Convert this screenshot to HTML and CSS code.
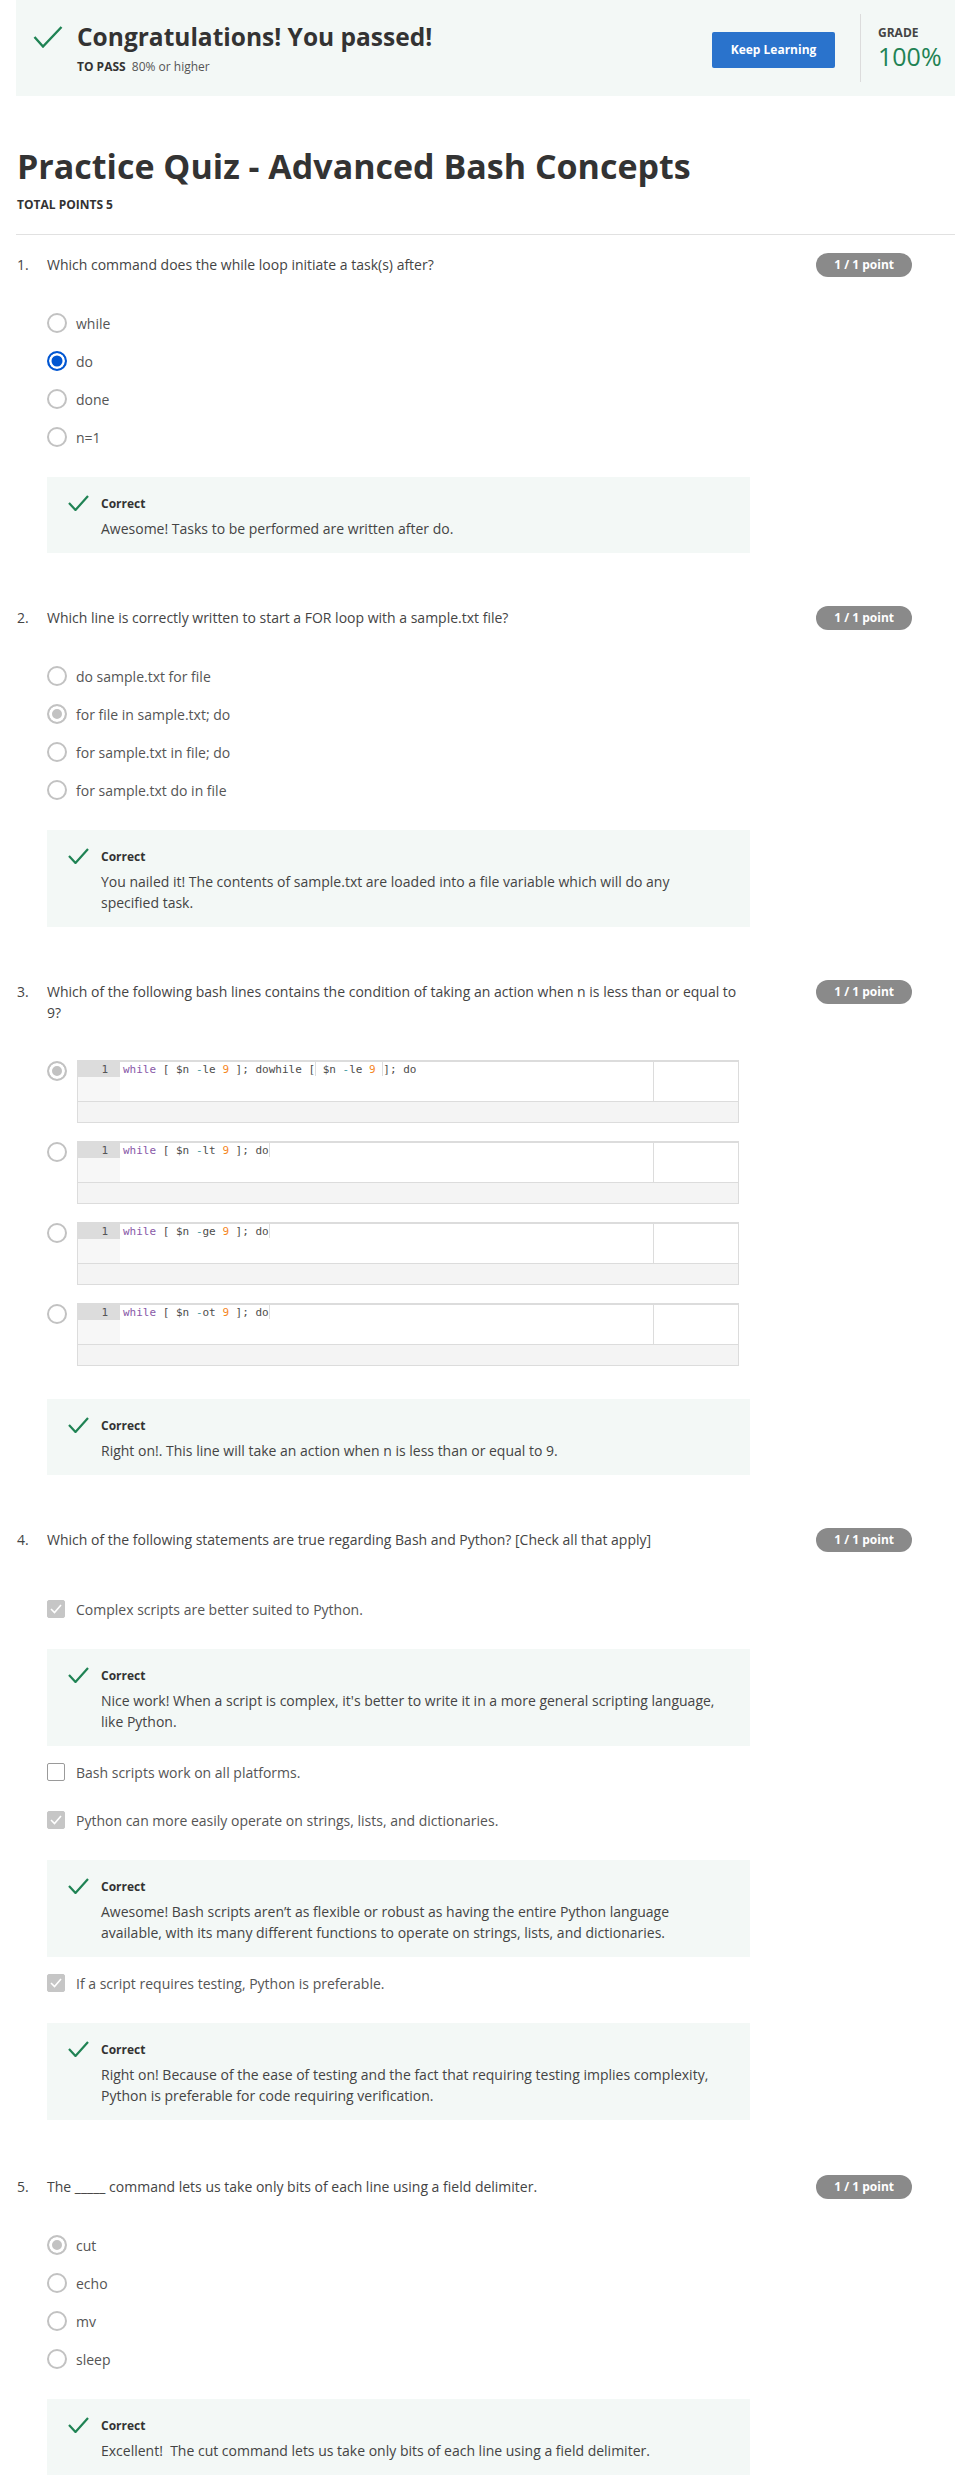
FILE: index.html
```html
<!DOCTYPE html>
<html lang="en">
<head>
<meta charset="utf-8">
<title>Practice Quiz - Advanced Bash Concepts</title>
<link rel="stylesheet" href="styles.css">
</head>
<body>
<div class="page">
  <div class="banner">
    <div class="banner-main">
      <div class="banner-title">
        <svg class="big-check" width="30" height="22" viewBox="0 0 30 22"><path d="M1.5 11 L10 20.5 L28.5 1" fill="none" stroke="#1f8354" stroke-width="2.4"/></svg>
        <h2>Congratulations! You passed!</h2>
      </div>
      <div class="banner-sub"><b>TO PASS</b> 80% or higher</div>
    </div>
    <a class="btn">Keep Learning</a>
    <div class="vdiv"></div>
    <div class="grade">
      <div class="grade-label">GRADE</div>
      <div class="grade-value">100%</div>
    </div>
  </div>

  <h1>Practice Quiz - Advanced Bash Concepts</h1>
  <div class="total">TOTAL POINTS 5</div>
  <div class="sep"></div>

  <!-- Q1 -->
  <section class="question first">
    <div class="q-head"><span class="q-num">1.</span><div class="q-text">Which command does the while loop initiate a task(s) after?</div><span class="badge">1 / 1 point</span></div>
    <div class="options">
      <div class="opt"><span class="radio"></span><span>while</span></div>
      <div class="opt"><span class="radio sel"></span><span>do</span></div>
      <div class="opt"><span class="radio"></span><span>done</span></div>
      <div class="opt"><span class="radio"></span><span>n=1</span></div>
      <div class="fb">
        <div class="fb-head"><svg width="21" height="16" viewBox="0 0 21 16"><path d="M1 8 L7.5 15 L20 1" fill="none" stroke="#1f8354" stroke-width="2.2"/></svg><span>Correct</span></div>
        <div class="fb-text">Awesome! Tasks to be performed are written after do.</div>
      </div>
    </div>
  </section>

  <!-- Q2 -->
  <section class="question">
    <div class="q-head"><span class="q-num">2.</span><div class="q-text">Which line is correctly written to start a FOR loop with a sample.txt file?</div><span class="badge">1 / 1 point</span></div>
    <div class="options">
      <div class="opt"><span class="radio"></span><span>do sample.txt for file</span></div>
      <div class="opt"><span class="radio dsel"></span><span>for file in sample.txt; do</span></div>
      <div class="opt"><span class="radio"></span><span>for sample.txt in file; do</span></div>
      <div class="opt"><span class="radio"></span><span>for sample.txt do in file</span></div>
      <div class="fb">
        <div class="fb-head"><svg width="21" height="16" viewBox="0 0 21 16"><path d="M1 8 L7.5 15 L20 1" fill="none" stroke="#1f8354" stroke-width="2.2"/></svg><span>Correct</span></div>
        <div class="fb-text">You nailed it! The contents of sample.txt are loaded into a file variable which will do any specified task.</div>
      </div>
    </div>
  </section>

  <!-- Q3 -->
  <section class="question">
    <div class="q-head"><span class="q-num">3.</span><div class="q-text">Which of the following bash lines contains the condition of taking an action when n is less than or equal to 9?</div><span class="badge">1 / 1 point</span></div>
    <div class="options">
      <div class="opt code-opt"><span class="radio dsel"></span>
        <div class="editor">
          <div class="ed-main">
            <div class="gutter"><div class="ln">1</div></div>
            <div class="code"><span class="kw">while</span> [ $n <span class="op">-</span>le <span class="num">9</span> ]; dowhile [<span class="mark"></span> $n <span class="op">-</span>le <span class="num">9</span> <span class="mark"></span>]; do</div>
            <div class="ed-side"></div>
          </div>
          <div class="ed-foot"></div>
        </div>
      </div>
      <div class="opt code-opt"><span class="radio"></span>
        <div class="editor">
          <div class="ed-main">
            <div class="gutter"><div class="ln">1</div></div>
            <div class="code"><span class="kw">while</span> [ $n <span class="op">-</span>lt <span class="num">9</span> ]; do<span class="mark"></span></div>
            <div class="ed-side"></div>
          </div>
          <div class="ed-foot"></div>
        </div>
      </div>
      <div class="opt code-opt"><span class="radio"></span>
        <div class="editor">
          <div class="ed-main">
            <div class="gutter"><div class="ln">1</div></div>
            <div class="code"><span class="kw">while</span> [ $n <span class="op">-</span>ge <span class="num">9</span> ]; do<span class="mark"></span></div>
            <div class="ed-side"></div>
          </div>
          <div class="ed-foot"></div>
        </div>
      </div>
      <div class="opt code-opt"><span class="radio"></span>
        <div class="editor">
          <div class="ed-main">
            <div class="gutter"><div class="ln">1</div></div>
            <div class="code"><span class="kw">while</span> [ $n <span class="op">-</span>ot <span class="num">9</span> ]; do<span class="mark"></span></div>
            <div class="ed-side"></div>
          </div>
          <div class="ed-foot"></div>
        </div>
      </div>
      <div class="fb code-fb">
        <div class="fb-head"><svg width="21" height="16" viewBox="0 0 21 16"><path d="M1 8 L7.5 15 L20 1" fill="none" stroke="#1f8354" stroke-width="2.2"/></svg><span>Correct</span></div>
        <div class="fb-text">Right on!. This line will take an action when n is less than or equal to 9.</div>
      </div>
    </div>
  </section>

  <!-- Q4 -->
  <section class="question">
    <div class="q-head"><span class="q-num">4.</span><div class="q-text">Which of the following statements are true regarding Bash and Python? [Check all that apply]</div><span class="badge">1 / 1 point</span></div>
    <div class="options checks">
      <div class="opt chk"><span class="cb on"><svg width="12" height="10" viewBox="0 0 12 10"><path d="M1 5 L4.5 8.5 L11 1" fill="none" stroke="#fff" stroke-width="1.6"/></svg></span><span>Complex scripts are better suited to Python.</span></div>
      <div class="fb chk-fb">
        <div class="fb-head"><svg width="21" height="16" viewBox="0 0 21 16"><path d="M1 8 L7.5 15 L20 1" fill="none" stroke="#1f8354" stroke-width="2.2"/></svg><span>Correct</span></div>
        <div class="fb-text">Nice work! When a script is complex, it's better to write it in a more general scripting language, like Python.</div>
      </div>
      <div class="opt chk"><span class="cb"></span><span>Bash scripts work on all platforms.</span></div>
      <div class="opt chk"><span class="cb on"><svg width="12" height="10" viewBox="0 0 12 10"><path d="M1 5 L4.5 8.5 L11 1" fill="none" stroke="#fff" stroke-width="1.6"/></svg></span><span>Python can more easily operate on strings, lists, and dictionaries.</span></div>
      <div class="fb chk-fb">
        <div class="fb-head"><svg width="21" height="16" viewBox="0 0 21 16"><path d="M1 8 L7.5 15 L20 1" fill="none" stroke="#1f8354" stroke-width="2.2"/></svg><span>Correct</span></div>
        <div class="fb-text">Awesome! Bash scripts aren’t as flexible or robust as having the entire Python language available, with its many different functions to operate on strings, lists, and dictionaries.</div>
      </div>
      <div class="opt chk"><span class="cb on"><svg width="12" height="10" viewBox="0 0 12 10"><path d="M1 5 L4.5 8.5 L11 1" fill="none" stroke="#fff" stroke-width="1.6"/></svg></span><span>If a script requires testing, Python is preferable.</span></div>
      <div class="fb chk-fb">
        <div class="fb-head"><svg width="21" height="16" viewBox="0 0 21 16"><path d="M1 8 L7.5 15 L20 1" fill="none" stroke="#1f8354" stroke-width="2.2"/></svg><span>Correct</span></div>
        <div class="fb-text">Right on! Because of the ease of testing and the fact that requiring testing implies complexity, Python is preferable for code requiring verification.</div>
      </div>
    </div>
  </section>

  <!-- Q5 -->
  <section class="question">
    <div class="q-head"><span class="q-num">5.</span><div class="q-text">The _____ command lets us take only bits of each line using a field delimiter.</div><span class="badge">1 / 1 point</span></div>
    <div class="options">
      <div class="opt"><span class="radio dsel"></span><span>cut</span></div>
      <div class="opt"><span class="radio"></span><span>echo</span></div>
      <div class="opt"><span class="radio"></span><span>mv</span></div>
      <div class="opt"><span class="radio"></span><span>sleep</span></div>
      <div class="fb">
        <div class="fb-head"><svg width="21" height="16" viewBox="0 0 21 16"><path d="M1 8 L7.5 15 L20 1" fill="none" stroke="#1f8354" stroke-width="2.2"/></svg><span>Correct</span></div>
        <div class="fb-text">Excellent!&nbsp; The cut command lets us take only bits of each line using a field delimiter.</div>
      </div>
    </div>
  </section>
</div>
</body>
</html>
```

FILE: styles.css
```css
* { box-sizing: border-box; }
body {
  margin: 0;
  background: #fff;
  font-family: "Open Sans", "Noto Sans", sans-serif;
  color: #444;
  font-size: 14px;
}
.page { margin: 0 16px; }

/* banner */
.banner {
  height: 96px;
  background: #f3f8f6;
  display: flex;
  align-items: center;
  padding: 0 15px 0 17px;
}
.banner-main { flex: 1; align-self: flex-start; padding-top: 21px; }
.banner-title { display: flex; align-items: center; height: 32px; }
.big-check { margin-right: 14px; flex: none; }
.banner-title h2 {
  margin: 0;
  font-size: 24.5px;
  line-height: 32px;
  font-weight: 700;
  color: #333;
}
.banner-sub {
  margin: 5px 0 0 44px;
  font-size: 12px;
  line-height: 18px;
  color: #555;
}
.banner-sub b { color: #333; margin-right: 3px; }
.btn {
  display: block;
  width: 123px;
  height: 36px;
  margin-top: 4px;
  background: #2a73cc;
  border-radius: 2px;
  color: #fff;
  font-weight: 700;
  font-size: 12px;
  line-height: 36px;
  text-align: center;
}
.vdiv { width: 1px; height: 68px; background: #dcdcdc; margin: 0 17px 0 25px; }
.grade { width: 62px; }
.grade-label { font-size: 12px; font-weight: 700; color: #444; line-height: 16px; }
.grade-value { font-size: 25px; line-height: 30px; color: #1f8354; }

/* title */
h1 {
  margin: 48px 0 0 1px;
  font-size: 34px;
  line-height: 44px;
  font-weight: 700;
  color: #333;
}
.total { margin: 8px 0 0 1px; font-size: 12px; line-height: 18px; font-weight: 700; color: #333; }
.sep { margin-top: 20px; height: 1px; background: #e1e1e1; }

/* questions */
.question { padding-top: 53px; }
.question.first { padding-top: 18px; }
.q-head { display: flex; align-items: flex-start; }
.q-num { width: 31px; flex: none; padding-left: 1px; line-height: 21px; margin-top: 1px; color: #444; }
.q-text { width: 703px; flex: none; line-height: 21px; margin-top: 1px; color: #444; }
.badge {
  margin-left: auto;
  margin-right: 43px;
  height: 24px;
  line-height: 24px;
  padding: 0 18px;
  border-radius: 12px;
  background: #8a8a8a;
  color: #fff;
  font-size: 12px;
  font-weight: 700;
  white-space: nowrap;
}

.options { margin-top: 27px; padding-left: 31px; }
.options.checks { margin-top: 33px; }
.opt { height: 38px; display: flex; align-items: center; gap: 9px; color: #555; }
.radio {
  width: 20px; height: 20px; flex: none;
  border-radius: 50%;
  border: 2px solid #c2c2c2;
  background: #fff;
}
.radio.sel { border: 2.5px solid #0056d2; background: #0056d2; box-shadow: inset 0 0 0 2.5px #fff; }
.radio.dsel { background: #c2c2c2; box-shadow: inset 0 0 0 3px #fff; }

.opt.chk { height: 48px; gap: 11px; }
.cb {
  width: 18px; height: 18px; flex: none;
  border-radius: 2px;
  border: 1px solid #9a9a9a;
  background: #fff;
  display: flex; align-items: center; justify-content: center;
}
.cb.on { background: #c6c6c6; border-color: #c6c6c6; }

/* code options */
.opt.code-opt { height: auto; align-items: flex-start; padding: 10px 0 8px; gap: 10px; }
.code-opt .radio { margin-top: 1px; }
.editor { width: 662px; border: 1px solid #dcdcdc; border-top: 2px solid #dcdcdc; background: #f4f4f4; }
.ed-main { display: flex; height: 40px; background: #fff; border-bottom: 1px solid #dcdcdc; }
.gutter { width: 42px; flex: none; background: #f7f7f7; }
.ln { height: 15px; line-height: 15px; background: #dcdcdc; text-align: right; padding-right: 12px; font: 11px/15px "DejaVu Sans Mono", "Liberation Mono", monospace; color: #555; }
.code { flex: 1; padding-left: 3px; font: 11px/15px "DejaVu Sans Mono", "Liberation Mono", monospace; color: #4d4d4c; white-space: pre; }
.code .kw { color: #8959a8; }
.code .num { color: #f5871f; }
.code .op { color: #3e999f; }
.code .mark { display: inline-block; width: 1px; height: 14px; background: #ddd; vertical-align: top; }
.ed-side { width: 85px; flex: none; border-left: 1px solid #dcdcdc; }
.ed-foot { height: 20px; }

/* feedback */
.fb {
  margin-top: 21px;
  width: 703px;
  padding: 17px 24px 14px 21px;
  background: #f3f8f6;
}
.fb-head { display: flex; align-items: center; height: 18px; }
.fb-head svg { margin-right: 12px; flex: none; }
.fb-head span { font-size: 12px; font-weight: 700; color: #333; }
.fb-text { margin: 6px 0 0 33px; line-height: 21px; color: #444; }
.fb.code-fb { margin-top: 25px; }
.fb.chk-fb { margin: 16px 0 2px; }
```
